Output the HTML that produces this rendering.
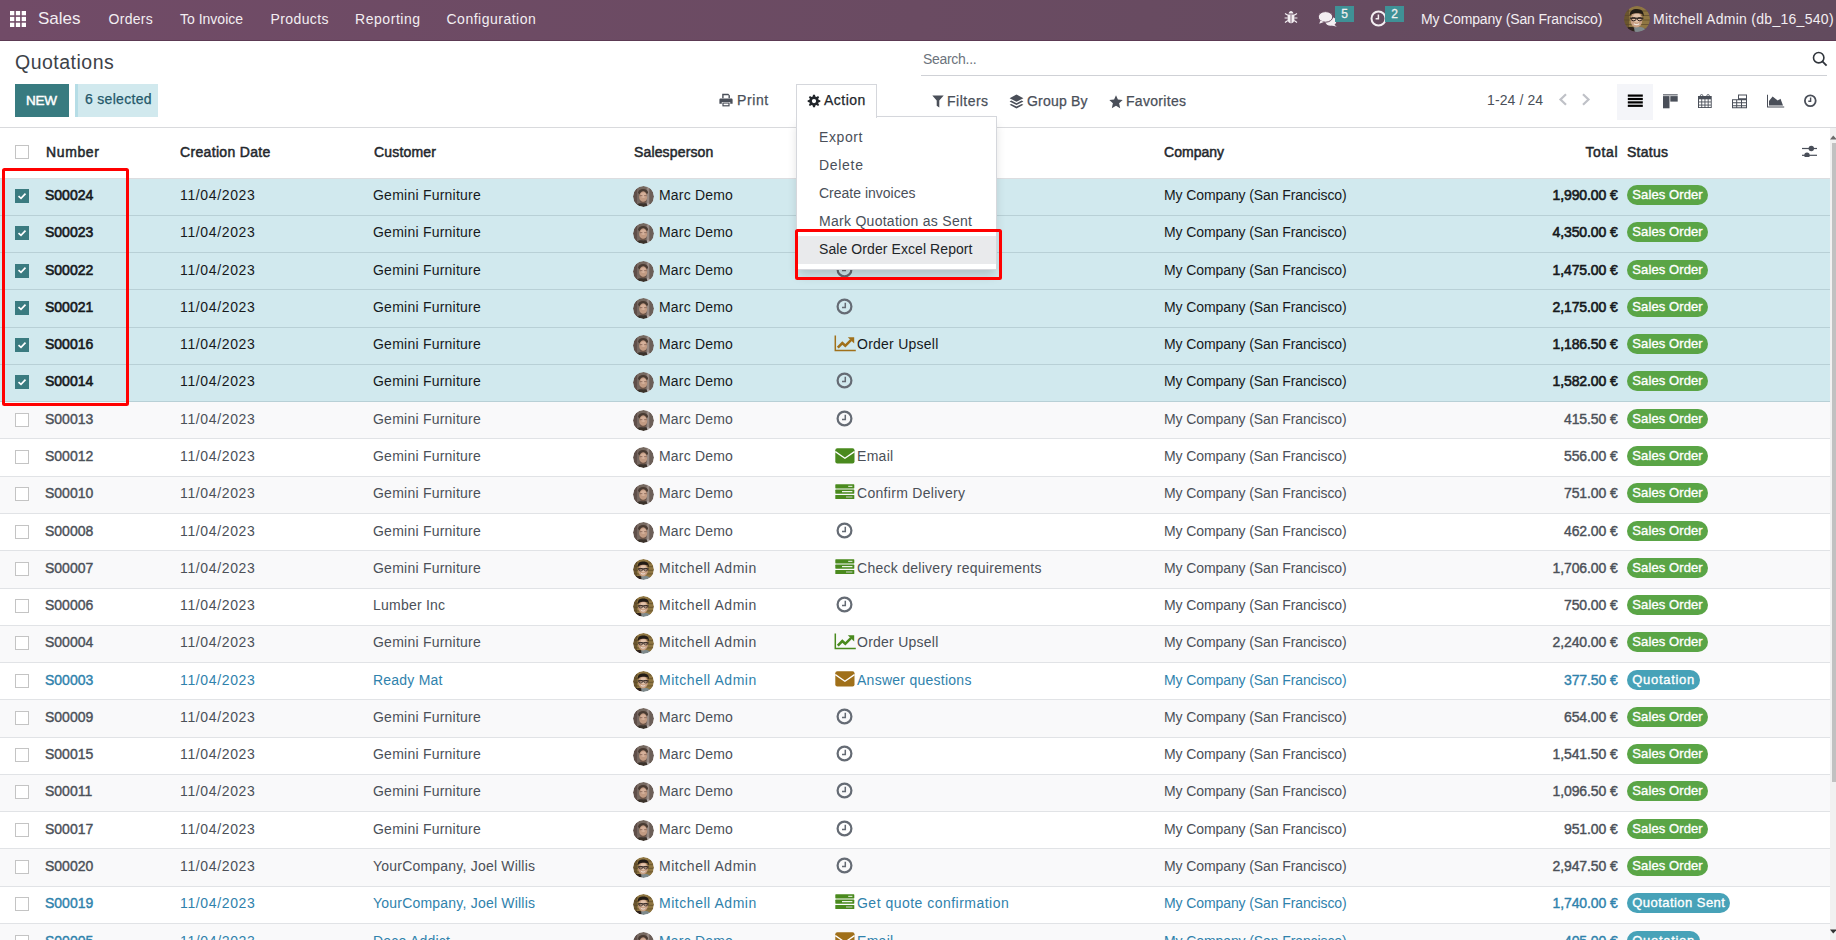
<!DOCTYPE html>
<html><head><meta charset="utf-8"><title>Quotations</title><style>
*{box-sizing:border-box;margin:0;padding:0}
html,body{width:1836px;height:940px;overflow:hidden;background:#fff}
body{font-family:"Liberation Sans",sans-serif;font-size:14px;color:#495057;position:relative}
.abs{position:absolute;white-space:nowrap;line-height:16px}
.med{-webkit-text-stroke:.25px currentColor}
/* navbar */
#nav{position:absolute;left:0;top:0;width:1836px;height:41px;background:linear-gradient(90deg,#714b67 0%,#6a4b62 50%,#624b5e 100%);border-bottom:1px solid #5c3a53}
#nav .t{position:absolute;top:11px;line-height:16px;color:#f3eef2;white-space:nowrap}
/* control panel */
#cp{position:absolute;left:0;top:41px;width:1836px;height:87px;border-bottom:1px solid #d9dadd;background:#fff}
/* table */
.hdr{position:absolute;left:0;top:128px;width:1830px;height:51px;border-bottom:1px solid #dcdde0;background:#fff}
.hdr .h{position:absolute;top:16px;line-height:16px;-webkit-text-stroke:.5px currentColor;color:#24282d;white-space:nowrap}
.row{position:absolute;left:0;width:1830px;border-bottom:1px solid #e1e3e6;background:#fff}
.row.odd{background:#f9f9fa}
.row.sel{background:#d1e9ee;border-bottom-color:#b8d0d6}
.rc{position:absolute;left:0;width:1830px;height:37px}
.rc .c{position:absolute;top:8px;line-height:16px;white-space:nowrap;color:#4b5058}
.rc.sel .c{color:#16191c}
.rc.blue .c{color:#2f82ac}
.rc .num{left:45px;-webkit-text-stroke:.4px currentColor;letter-spacing:0}
.rc .dt{left:180px;letter-spacing:.64px}
.rc .cu{left:373px}
.rc .sp{left:659px}
.rc .at{left:857px}
.rc .co{left:1164px;letter-spacing:-.1px}
.rc .tot{right:212.3px;-webkit-text-stroke:.4px currentColor;letter-spacing:-.1px;text-align:right}
.rc .av{position:absolute;left:633px;top:7px;width:21px;height:21px;border-radius:50%;overflow:hidden}
.rc .av svg{display:block}
.rc .ai{position:absolute}
.rc .ck{left:836px;top:7px}
.rc .ch{left:833.5px;top:6.5px}
.rc .ml{left:835px;top:7.8px}
.rc .tk{left:835px;top:7px}
.cb{position:absolute;left:15px;top:10px;width:14px;height:14px;border:1.5px solid #c4c4c4;background:#fff}
.cb.on{background:#3a7b80;border-color:#3a7b80}
.cb.on svg{position:absolute;left:-1.5px;top:-1.5px}
.rc .badge{position:absolute;left:1627px;top:6px;height:20px;border-radius:10px;padding:0 5px 0 5.3px;color:#fff;font-size:13px;line-height:20px;white-space:nowrap;letter-spacing:.1px;-webkit-text-stroke:.35px #fff}
.rc .badge.bq{letter-spacing:.7px}
.rc .badge.bqs{letter-spacing:.45px}
.rc.sel .num,.rc.sel .tot{-webkit-text-stroke:.6px currentColor}

</style></head><body>
<svg width="0" height="0" style="position:absolute">
 <defs>
  <filter id="bl" x="-10%" y="-10%" width="120%" height="120%"><feGaussianBlur stdDeviation="0.55"/></filter>
  <clipPath id="cc"><circle cx="13" cy="13" r="13"/></clipPath>
  <symbol id="ava" viewBox="0 0 26 26">
   <g clip-path="url(#cc)"><g filter="url(#bl)">
    <rect x="-2" y="-2" width="30" height="30" fill="#8f7642"/>
    <path d="M-2 5H28M-2 9.5H28M-2 14H28M-2 18.5H28M-2 23H28" stroke="#6a5630" stroke-width="1.2"/>
    <rect x="-2" y="-2" width="7" height="30" fill="#5a4628" opacity=".7"/>
    <path d="M6 28C7 22 10 20.5 14 21C18 20.5 22 22 24 28Z" fill="#7f8a8c"/>
    <path d="M-2 28C0 22 4 20 10 21.5L11 28Z" fill="#2f241c"/>
    <ellipse cx="12.4" cy="13.8" rx="6" ry="7.8" fill="#c9a084"/>
    <ellipse cx="12.8" cy="12" rx="3.8" ry="4.4" fill="#e2c2aa"/>
    <path d="M5.6 9.5C6 4.5 9 3 13 3.1C17.5 3.2 20 5.5 19.8 10.5L18.3 8.2C16 6.8 10 6.8 7 8.7Z" fill="#241a15"/>
    <path d="M5.8 12.2H19.4" stroke="#2e2420" stroke-width="1.3"/>
    <ellipse cx="9.6" cy="13.2" rx="2.4" ry="1.6" fill="none" stroke="#2e2420" stroke-width="1"/>
    <ellipse cx="15.8" cy="13.2" rx="2.4" ry="1.6" fill="none" stroke="#2e2420" stroke-width="1"/>
    <path d="M9.8 17.6C11.2 19 13.8 19 15.2 17.6" stroke="#efe4dc" stroke-width="1.2" fill="none"/>
   </g></g>
  </symbol>
  <symbol id="avm" viewBox="0 0 26 26">
   <g clip-path="url(#cc)"><g filter="url(#bl)">
    <rect x="-2" y="-2" width="30" height="30" fill="#75675f"/>
    <rect x="-2" y="-2" width="7" height="30" fill="#5e504a"/>
    <rect x="17" y="-2" width="3" height="30" fill="#978a84"/>
    <rect x="21" y="-2" width="7" height="30" fill="#6c5f58"/>
    <ellipse cx="12.5" cy="7.8" rx="6" ry="4.2" fill="#4a3a31"/>
    <ellipse cx="12.6" cy="13.2" rx="5" ry="6.6" fill="#c19a82"/>
    <ellipse cx="12.8" cy="11.5" rx="3.2" ry="3.4" fill="#d5b09a"/>
    <path d="M8.2 12H11.6M13.8 12H17" stroke="#7b5a4c" stroke-width="1"/>
    <path d="M8.5 17C10 20.5 15 20.5 16.8 17L16 20C14 21.5 11 21.5 9 20Z" fill="#6e5446"/>
    <path d="M2 28C3 22.5 7 21 12.5 21.6C18 21 21.5 22.5 23 28Z" fill="#3a302b"/>
    <path d="M17 21L22 23L22 28L18 28Z" fill="#d8d2d0" opacity=".7"/>
   </g></g>
  </symbol>
 </defs>
</svg>
<div id="nav">
 <svg style="position:absolute;left:10px;top:11px" width="16" height="16" viewBox="0 0 16 16" fill="#fff">
  <rect x="0" y="0" width="4.3" height="4.3"/><rect x="5.85" y="0" width="4.3" height="4.3"/><rect x="11.7" y="0" width="4.3" height="4.3"/>
  <rect x="0" y="5.85" width="4.3" height="4.3"/><rect x="5.85" y="5.85" width="4.3" height="4.3"/><rect x="11.7" y="5.85" width="4.3" height="4.3"/>
  <rect x="0" y="11.7" width="4.3" height="4.3"/><rect x="5.85" y="11.7" width="4.3" height="4.3"/><rect x="11.7" y="11.7" width="4.3" height="4.3"/>
 </svg>
 <span class="t" style="left:38px;top:9px;font-size:17px;line-height:20px">Sales</span>
 <span class="t" style="left:108.5px;letter-spacing:.3px">Orders</span>
 <span class="t" style="left:180px">To Invoice</span>
 <span class="t" style="left:270.5px;letter-spacing:.4px">Products</span>
 <span class="t" style="left:355px;letter-spacing:.55px">Reporting</span>
 <span class="t" style="left:446.5px;letter-spacing:.5px">Configuration</span>
 <!-- bug -->
 <svg style="position:absolute;left:1284px;top:10px" width="14" height="14" viewBox="0 0 14 14" fill="#f3eef2">
  <path d="M4.6 3.6C4.9 2 5.9 1 7 1C8.1 1 9.1 2 9.4 3.6Z"/>
  <path d="M3.6 4.4H10.4V9.5C10.4 11.6 8.9 13.2 7 13.2C5.1 13.2 3.6 11.6 3.6 9.5Z"/>
  <path d="M1 3.5L3.8 5.2M13 3.5L10.2 5.2M0.6 8H3.6M13.4 8H10.4M1 12.5L3.8 10.6M13 12.5L10.2 10.6" stroke="#f3eef2" stroke-width="1.2"/>
  <rect x="6.6" y="4.8" width="0.8" height="8" fill="#6a4b62"/>
 </svg>
 <!-- chat -->
 <svg style="position:absolute;left:1318px;top:11px" width="20" height="17" viewBox="0 0 20 17" fill="#f3eef2">
  <ellipse cx="12.8" cy="10.3" rx="5.6" ry="4.4"/>
  <path d="M15.5 13L18.8 15.8L14 14.6Z"/>
  <ellipse cx="7.5" cy="5.9" rx="7.2" ry="5.3" stroke="#684b60" stroke-width="1"/>
  <path d="M2.5 9.5L1.2 12.8L5.8 11Z"/>
 </svg>
 <span style="position:absolute;left:1335px;top:6px;width:19px;height:16px;background:#3f9196;color:#f0f0f0;font-size:12px;line-height:16px;text-align:center;-webkit-text-stroke:.3px #f0f0f0">5</span>
 <!-- clock -->
 <svg style="position:absolute;left:1370px;top:10px" width="17" height="17" viewBox="0 0 17 17">
  <circle cx="8.5" cy="8.5" r="7" fill="none" stroke="#f3eef2" stroke-width="2"/>
  <path d="M8.4 4.6V8.8H5.6" fill="none" stroke="#f3eef2" stroke-width="1.5"/>
 </svg>
 <span style="position:absolute;left:1385px;top:6px;width:19px;height:16px;background:#3f9196;color:#f0f0f0;font-size:12px;line-height:16px;text-align:center;-webkit-text-stroke:.3px #f0f0f0">2</span>
 <span class="t" style="left:1421px;letter-spacing:-.15px">My Company (San Francisco)</span>
 <span style="position:absolute;left:1624px;top:6px;width:26px;height:26px;border-radius:50%;overflow:hidden"><svg width="26" height="26" viewBox="0 0 26 26" style="display:block"><use href="#ava"/></svg></span>
 <span class="t" style="left:1653px;letter-spacing:.28px">Mitchell Admin (db_16_540)</span>
</div>
<div id="cp">
 <span class="abs" style="left:15px;top:10px;font-size:19.5px;line-height:22px;letter-spacing:.5px;color:#3d4248">Quotations</span>
 <!-- search -->
 <span class="abs" style="left:923px;top:10px;color:#6c737c;letter-spacing:-.3px">Search...</span>
 <div style="position:absolute;left:921px;top:34px;width:906px;height:1px;background:#cfd1d6"></div>
 <svg style="position:absolute;left:1812px;top:10px" width="16" height="16" viewBox="0 0 16 16"><circle cx="6.7" cy="6.7" r="5.2" fill="none" stroke="#2f343b" stroke-width="1.6"/><path d="M10.4 10.4L14.6 14.6" stroke="#2f343b" stroke-width="1.8"/></svg>
 <!-- buttons -->
 <div style="position:absolute;left:15px;top:43px;width:54px;height:33px;background:#387b80"></div>
 <span class="abs" style="left:26px;top:51.5px;font-size:13.5px;color:#fff;-webkit-text-stroke:.45px #fff;letter-spacing:-.3px">NEW</span>
 <div style="position:absolute;left:75px;top:43px;width:83px;height:33px;background:#d1e9ee;border-left:3px solid #b6dde6"></div>
 <span class="abs med" style="left:85px;top:50px;color:#24586a;letter-spacing:.3px">6 selected</span>
 <!-- print -->
 <svg style="position:absolute;left:719px;top:93px;top:52px" width="14" height="14" viewBox="0 0 14 14" fill="#4a4f59">
  <path d="M3.2 0.8H9.3L10.9 2.4V5.2H9.5V2.2H4.6V5.2H3.2Z"/>
  <path d="M1.6 5.6H12.4C13.1 5.6 13.6 6.1 13.6 6.8V10.8H11.2V8.9H2.8V10.8H0.4V6.8C0.4 6.1 0.9 5.6 1.6 5.6Z"/>
  <path d="M3.4 9.5H10.6V13.4H3.4Z"/><rect x="4.6" y="10.6" width="4.8" height="1.6" fill="#fff"/>
 </svg>
 <span class="abs med" style="left:737px;top:51px;color:#4a4f59;letter-spacing:.6px">Print</span>
 <!-- action toggle -->
 <div style="position:absolute;left:796px;top:43px;width:81px;height:34px;border:1px solid #d5d7dc;border-bottom:none;background:#fff;z-index:3"></div>
 <svg style="position:absolute;left:806.5px;top:53px;z-index:4" width="14" height="14" viewBox="0 0 14 14"><path fill="#22262b" fill-rule="evenodd" d="M6 0.8H8L8.3 2.5L9.6 3L11 2L12.2 3.2L11.2 4.6L11.7 5.9L13.3 6.2V7.9L11.7 8.2L11.2 9.5L12.2 10.9L11 12.1L9.6 11.1L8.3 11.6L8 13.3H6L5.7 11.6L4.4 11.1L3 12.1L1.8 10.9L2.8 9.5L2.3 8.2L0.7 7.9V6.2L2.3 5.9L2.8 4.6L1.8 3.2L3 2L4.4 3L5.7 2.5Z M7 4.9A2.15 2.15 0 1 0 7 9.2A2.15 2.15 0 1 0 7 4.9Z"/></svg>
 <span class="abs med" style="left:824px;top:51px;color:#22262b;letter-spacing:.5px;z-index:4">Action</span>
 <!-- filters -->
 <svg style="position:absolute;left:932px;top:54px" width="12" height="13" viewBox="0 0 12 13" fill="#4a4f59"><path d="M0.3 0.5H11.7L7.3 5.6V12.5L4.7 10.8V5.6Z"/></svg>
 <span class="abs med" style="left:947px;top:52px;color:#4a4f59;letter-spacing:.5px">Filters</span>
 <svg style="position:absolute;left:1009px;top:52.5px" width="15" height="16" viewBox="0 0 15 16" fill="#4a4f59">
  <path d="M7.5 0.6L14.4 4.2L7.5 7.8L0.6 4.2Z"/>
  <path d="M2.3 6.6L7.5 9.3L12.7 6.6L14.4 7.5L7.5 11.1L0.6 7.5Z"/>
  <path d="M2.3 9.9L7.5 12.6L12.7 9.9L14.4 10.8L7.5 14.4L0.6 10.8Z"/>
 </svg>
 <span class="abs med" style="left:1027px;top:52px;color:#4a4f59;letter-spacing:.2px">Group By</span>
 <svg style="position:absolute;left:1108.5px;top:53.5px" width="14" height="14" viewBox="0 0 14 14" fill="#4a4f59"><path d="M7 0.2L8.9 4.6L13.7 5L10.1 8.3L11.2 13.3L7 10.7L2.8 13.3L3.9 8.3L0.3 5L5.1 4.6Z"/></svg>
 <span class="abs med" style="left:1126px;top:52px;color:#4a4f59;letter-spacing:.3px">Favorites</span>
 <!-- pager -->
 <span class="abs" style="left:1487px;top:51px;color:#4a4f59;letter-spacing:.1px">1-24 / 24</span>
 <svg style="position:absolute;left:1558px;top:52px" width="10" height="13" viewBox="0 0 10 13"><path d="M8 1.2L2.5 6.5L8 11.8" fill="none" stroke="#bfc1c7" stroke-width="2.2"/></svg>
 <svg style="position:absolute;left:1581px;top:52px" width="10" height="13" viewBox="0 0 10 13"><path d="M2 1.2L7.5 6.5L2 11.8" fill="none" stroke="#bfc1c7" stroke-width="2.2"/></svg>
 <!-- view switcher -->
 <div style="position:absolute;left:1617px;top:43px;width:36px;height:36px;background:#f4f5f9"></div>
 <svg style="position:absolute;left:1627px;top:52px" width="16" height="14" viewBox="0 0 16 14" fill="#000"><rect x="0.8" y="1.5" width="15" height="2.2"/><rect x="0.8" y="4.9" width="15" height="2.2"/><rect x="0.8" y="8.3" width="15" height="2.2"/><rect x="0.8" y="11.7" width="15" height="2.2"/></svg>
 <svg style="position:absolute;left:1662px;top:52px" width="16" height="16" viewBox="0 0 16 16" fill="#4a4f59"><rect x="1" y="1.3" width="14.7" height="1.1"/><rect x="1" y="3.1" width="6.5" height="12.2"/><rect x="8.3" y="3.1" width="7.4" height="5.5"/></svg>
 <svg style="position:absolute;left:1697px;top:52px" width="16" height="16" viewBox="0 0 16 16" fill="#4a4f59">
  <rect x="1" y="3" width="13.7" height="12"/>
  <g fill="#fff">
   <rect x="2" y="6.3" width="2.3" height="2.2"/><rect x="5.2" y="6.3" width="2.3" height="2.2"/><rect x="8.4" y="6.3" width="2.3" height="2.2"/><rect x="11.6" y="6.3" width="2.2" height="2.2"/>
   <rect x="2" y="9.4" width="2.3" height="2.2"/><rect x="5.2" y="9.4" width="2.3" height="2.2"/><rect x="8.4" y="9.4" width="2.3" height="2.2"/><rect x="11.6" y="9.4" width="2.2" height="2.2"/>
   <rect x="2" y="12.5" width="2.3" height="1.6"/><rect x="5.2" y="12.5" width="2.3" height="1.6"/><rect x="8.4" y="12.5" width="2.3" height="1.6"/><rect x="11.6" y="12.5" width="2.2" height="1.6"/>
  </g>
  <rect x="3.4" y="1.6" width="2.4" height="3" rx="1" fill="none" stroke="#4a4f59" stroke-width="0.9"/>
  <rect x="9.9" y="1.6" width="2.4" height="3" rx="1" fill="none" stroke="#4a4f59" stroke-width="0.9"/>
 </svg>
 <svg style="position:absolute;left:1731px;top:52px" width="17" height="16" viewBox="0 0 17 16" fill="#4a4f59">
  <path fill-rule="evenodd" d="M7 1.5H16V15.2H1V6.2H7Z M8 2.5V5.3H15V2.5Z M2 7.2V9.3H5.2V7.2Z M6.2 7.2V9.3H10V7.2Z M11 7.2V9.3H15V7.2Z M2 10.3V12.3H5.2V10.3Z M6.2 10.3V12.3H10V10.3Z M11 10.3V12.3H15V10.3Z M2 13.3V14.2H5.2V13.3Z M6.2 13.3V14.2H10V13.3Z M11 13.3V14.2H15V13.3Z"/>
 </svg>
 <svg style="position:absolute;left:1766px;top:52px" width="19" height="16" viewBox="0 0 19 16" fill="#4a4f59"><path d="M1 1.7H2V13.4H18.2V14.6H1Z"/><path d="M3 12.4V8L6.6 3.6L11.7 7.6L14.5 5.8L17 12.4Z"/></svg>
 <svg style="position:absolute;left:1803px;top:52px" width="15" height="15" viewBox="0 0 15 15"><circle cx="7.3" cy="7.7" r="5.4" fill="none" stroke="#4a4f59" stroke-width="1.8"/><path d="M7.6 4.6V8.2H5.3" fill="none" stroke="#4a4f59" stroke-width="1.4"/></svg>
</div>
<div class="hdr">
 <span class="cb" style="top:17px"></span>
 <span class="h" style="left:46px;letter-spacing:.63px">Number</span>
 <span class="h" style="left:180px;letter-spacing:.33px">Creation Date</span>
 <span class="h" style="left:374px;letter-spacing:.17px">Customer</span>
 <span class="h" style="left:634px;letter-spacing:.15px">Salesperson</span>
 <span class="h" style="left:857px">Activities</span>
 <span class="h" style="left:1164px;letter-spacing:.03px">Company</span>
 <span class="h" style="right:211.7px;letter-spacing:.66px">Total</span>
 <span class="h" style="left:1627px;letter-spacing:.28px">Status</span>
 <svg style="position:absolute;left:1801px;top:17px" width="17" height="12" viewBox="0 0 17 12" fill="#4a4f59"><rect x="1" y="2.9" width="15" height="1.2"/><rect x="1" y="9.7" width="15" height="1.2"/><circle cx="10.3" cy="3.5" r="2.7"/><circle cx="6" cy="10.3" r="2.7"/></svg>
</div>
<div class="row sel" style="top:179px;height:37px"></div>
<div class="rc sel" style="top:179.10px"><span class="cb on"><svg width="14" height="14" viewBox="0 0 14 14"><path d="M3.5 7.2L6 9.4L10.5 4.7" fill="none" stroke="#fff" stroke-width="1.7"/></svg></span><span class="c num">S00024</span><span class="c dt">11/04/2023</span><span class="c cu" style="letter-spacing:0.235px">Gemini Furniture</span><span class="av"><svg width="21" height="21" viewBox="0 0 26 26"><use href="#avm"/></svg></span><span class="c sp" style="letter-spacing:0.18px">Marc Demo</span><svg class="ai ck" width="17" height="17" viewBox="0 0 17 17"><circle cx="8.5" cy="8.5" r="6.9" fill="none" stroke="#656b74" stroke-width="2.2"/><path d="M9.3 4.8V9.6H6" fill="none" stroke="#656b74" stroke-width="1.5"/></svg><span class="c at" style="letter-spacing:0.26px"></span><span class="c co">My Company (San Francisco)</span><span class="c tot">1,990.00 €</span><span class="badge bso" style="background:#5aa546">Sales Order</span></div>
<div class="row sel" style="top:216px;height:37px"></div>
<div class="rc sel" style="top:216.37px"><span class="cb on"><svg width="14" height="14" viewBox="0 0 14 14"><path d="M3.5 7.2L6 9.4L10.5 4.7" fill="none" stroke="#fff" stroke-width="1.7"/></svg></span><span class="c num">S00023</span><span class="c dt">11/04/2023</span><span class="c cu" style="letter-spacing:0.235px">Gemini Furniture</span><span class="av"><svg width="21" height="21" viewBox="0 0 26 26"><use href="#avm"/></svg></span><span class="c sp" style="letter-spacing:0.18px">Marc Demo</span><svg class="ai ck" width="17" height="17" viewBox="0 0 17 17"><circle cx="8.5" cy="8.5" r="6.9" fill="none" stroke="#656b74" stroke-width="2.2"/><path d="M9.3 4.8V9.6H6" fill="none" stroke="#656b74" stroke-width="1.5"/></svg><span class="c at" style="letter-spacing:0.26px"></span><span class="c co">My Company (San Francisco)</span><span class="c tot">4,350.00 €</span><span class="badge bso" style="background:#5aa546">Sales Order</span></div>
<div class="row sel" style="top:253px;height:37px"></div>
<div class="rc sel" style="top:253.64px"><span class="cb on"><svg width="14" height="14" viewBox="0 0 14 14"><path d="M3.5 7.2L6 9.4L10.5 4.7" fill="none" stroke="#fff" stroke-width="1.7"/></svg></span><span class="c num">S00022</span><span class="c dt">11/04/2023</span><span class="c cu" style="letter-spacing:0.235px">Gemini Furniture</span><span class="av"><svg width="21" height="21" viewBox="0 0 26 26"><use href="#avm"/></svg></span><span class="c sp" style="letter-spacing:0.18px">Marc Demo</span><svg class="ai ck" width="17" height="17" viewBox="0 0 17 17"><circle cx="8.5" cy="8.5" r="6.9" fill="none" stroke="#656b74" stroke-width="2.2"/><path d="M9.3 4.8V9.6H6" fill="none" stroke="#656b74" stroke-width="1.5"/></svg><span class="c at" style="letter-spacing:0.26px"></span><span class="c co">My Company (San Francisco)</span><span class="c tot">1,475.00 €</span><span class="badge bso" style="background:#5aa546">Sales Order</span></div>
<div class="row sel" style="top:290px;height:38px"></div>
<div class="rc sel" style="top:290.91px"><span class="cb on"><svg width="14" height="14" viewBox="0 0 14 14"><path d="M3.5 7.2L6 9.4L10.5 4.7" fill="none" stroke="#fff" stroke-width="1.7"/></svg></span><span class="c num">S00021</span><span class="c dt">11/04/2023</span><span class="c cu" style="letter-spacing:0.235px">Gemini Furniture</span><span class="av"><svg width="21" height="21" viewBox="0 0 26 26"><use href="#avm"/></svg></span><span class="c sp" style="letter-spacing:0.18px">Marc Demo</span><svg class="ai ck" width="17" height="17" viewBox="0 0 17 17"><circle cx="8.5" cy="8.5" r="6.9" fill="none" stroke="#656b74" stroke-width="2.2"/><path d="M9.3 4.8V9.6H6" fill="none" stroke="#656b74" stroke-width="1.5"/></svg><span class="c at" style="letter-spacing:0.26px"></span><span class="c co">My Company (San Francisco)</span><span class="c tot">2,175.00 €</span><span class="badge bso" style="background:#5aa546">Sales Order</span></div>
<div class="row sel" style="top:328px;height:37px"></div>
<div class="rc sel" style="top:328.18px"><span class="cb on"><svg width="14" height="14" viewBox="0 0 14 14"><path d="M3.5 7.2L6 9.4L10.5 4.7" fill="none" stroke="#fff" stroke-width="1.7"/></svg></span><span class="c num">S00016</span><span class="c dt">11/04/2023</span><span class="c cu" style="letter-spacing:0.235px">Gemini Furniture</span><span class="av"><svg width="21" height="21" viewBox="0 0 26 26"><use href="#avm"/></svg></span><span class="c sp" style="letter-spacing:0.18px">Marc Demo</span><svg class="ai ch" width="22" height="17" viewBox="0 0 22 17"><path d="M1.3 0.5V15.6H21.8" fill="none" stroke="#a0701a" stroke-width="1.5"/><path d="M3.8 12.6L8.3 8L11.3 10.8L17.2 4.8" fill="none" stroke="#a0701a" stroke-width="2.6"/><path d="M13.8 2.2H20.2V8.6Z" fill="#a0701a"/></svg><span class="c at" style="letter-spacing:0.25px">Order Upsell</span><span class="c co">My Company (San Francisco)</span><span class="c tot">1,186.50 €</span><span class="badge bso" style="background:#5aa546">Sales Order</span></div>
<div class="row sel" style="top:365px;height:37px"></div>
<div class="rc sel" style="top:365.45px"><span class="cb on"><svg width="14" height="14" viewBox="0 0 14 14"><path d="M3.5 7.2L6 9.4L10.5 4.7" fill="none" stroke="#fff" stroke-width="1.7"/></svg></span><span class="c num">S00014</span><span class="c dt">11/04/2023</span><span class="c cu" style="letter-spacing:0.235px">Gemini Furniture</span><span class="av"><svg width="21" height="21" viewBox="0 0 26 26"><use href="#avm"/></svg></span><span class="c sp" style="letter-spacing:0.18px">Marc Demo</span><svg class="ai ck" width="17" height="17" viewBox="0 0 17 17"><circle cx="8.5" cy="8.5" r="6.9" fill="none" stroke="#656b74" stroke-width="2.2"/><path d="M9.3 4.8V9.6H6" fill="none" stroke="#656b74" stroke-width="1.5"/></svg><span class="c at" style="letter-spacing:0.26px"></span><span class="c co">My Company (San Francisco)</span><span class="c tot">1,582.00 €</span><span class="badge bso" style="background:#5aa546">Sales Order</span></div>
<div class="row odd" style="top:402px;height:37px"></div>
<div class="rc odd" style="top:402.72px"><span class="cb"></span><span class="c num">S00013</span><span class="c dt">11/04/2023</span><span class="c cu" style="letter-spacing:0.235px">Gemini Furniture</span><span class="av"><svg width="21" height="21" viewBox="0 0 26 26"><use href="#avm"/></svg></span><span class="c sp" style="letter-spacing:0.18px">Marc Demo</span><svg class="ai ck" width="17" height="17" viewBox="0 0 17 17"><circle cx="8.5" cy="8.5" r="6.9" fill="none" stroke="#656b74" stroke-width="2.2"/><path d="M9.3 4.8V9.6H6" fill="none" stroke="#656b74" stroke-width="1.5"/></svg><span class="c at" style="letter-spacing:0.26px"></span><span class="c co">My Company (San Francisco)</span><span class="c tot">415.50 €</span><span class="badge bso" style="background:#5aa546">Sales Order</span></div>
<div class="row" style="top:439px;height:38px"></div>
<div class="rc " style="top:439.99px"><span class="cb"></span><span class="c num">S00012</span><span class="c dt">11/04/2023</span><span class="c cu" style="letter-spacing:0.235px">Gemini Furniture</span><span class="av"><svg width="21" height="21" viewBox="0 0 26 26"><use href="#avm"/></svg></span><span class="c sp" style="letter-spacing:0.18px">Marc Demo</span><svg class="ai ml" width="20" height="16" viewBox="0 0 20 16"><rect x="0.3" y="0.3" width="19.2" height="15.2" rx="2" fill="#4a8a1e"/><path d="M0.3 3.6L9.9 10.2L19.5 3.6" fill="none" stroke="#fff" stroke-width="1.3"/></svg><span class="c at" style="letter-spacing:0.3px">Email</span><span class="c co">My Company (San Francisco)</span><span class="c tot">556.00 €</span><span class="badge bso" style="background:#5aa546">Sales Order</span></div>
<div class="row odd" style="top:477px;height:37px"></div>
<div class="rc odd" style="top:477.26px"><span class="cb"></span><span class="c num">S00010</span><span class="c dt">11/04/2023</span><span class="c cu" style="letter-spacing:0.235px">Gemini Furniture</span><span class="av"><svg width="21" height="21" viewBox="0 0 26 26"><use href="#avm"/></svg></span><span class="c sp" style="letter-spacing:0.18px">Marc Demo</span><svg class="ai tk" width="20" height="16" viewBox="0 0 20 16"><rect x="0.3" y="0.3" width="19" height="4.1" rx="0.6" fill="#4a8a1e"/><rect x="0.3" y="5.6" width="19" height="4.1" rx="0.6" fill="#4a8a1e"/><rect x="0.3" y="10.9" width="19" height="4.1" rx="0.6" fill="#4a8a1e"/><rect x="13.2" y="1.8" width="4.2" height="1.1" fill="#e6ece2"/><rect x="7" y="7.1" width="10.4" height="1.1" fill="#fff"/><rect x="11" y="12.4" width="6.4" height="1.2" fill="#b9c6b2"/></svg><span class="c at" style="letter-spacing:0.3px">Confirm Delivery</span><span class="c co">My Company (San Francisco)</span><span class="c tot">751.00 €</span><span class="badge bso" style="background:#5aa546">Sales Order</span></div>
<div class="row" style="top:514px;height:37px"></div>
<div class="rc " style="top:514.53px"><span class="cb"></span><span class="c num">S00008</span><span class="c dt">11/04/2023</span><span class="c cu" style="letter-spacing:0.235px">Gemini Furniture</span><span class="av"><svg width="21" height="21" viewBox="0 0 26 26"><use href="#avm"/></svg></span><span class="c sp" style="letter-spacing:0.18px">Marc Demo</span><svg class="ai ck" width="17" height="17" viewBox="0 0 17 17"><circle cx="8.5" cy="8.5" r="6.9" fill="none" stroke="#656b74" stroke-width="2.2"/><path d="M9.3 4.8V9.6H6" fill="none" stroke="#656b74" stroke-width="1.5"/></svg><span class="c at" style="letter-spacing:0.26px"></span><span class="c co">My Company (San Francisco)</span><span class="c tot">462.00 €</span><span class="badge bso" style="background:#5aa546">Sales Order</span></div>
<div class="row odd" style="top:551px;height:38px"></div>
<div class="rc odd" style="top:551.80px"><span class="cb"></span><span class="c num">S00007</span><span class="c dt">11/04/2023</span><span class="c cu" style="letter-spacing:0.235px">Gemini Furniture</span><span class="av"><svg width="21" height="21" viewBox="0 0 26 26"><use href="#ava"/></svg></span><span class="c sp" style="letter-spacing:0.54px">Mitchell Admin</span><svg class="ai tk" width="20" height="16" viewBox="0 0 20 16"><rect x="0.3" y="0.3" width="19" height="4.1" rx="0.6" fill="#4a8a1e"/><rect x="0.3" y="5.6" width="19" height="4.1" rx="0.6" fill="#4a8a1e"/><rect x="0.3" y="10.9" width="19" height="4.1" rx="0.6" fill="#4a8a1e"/><rect x="13.2" y="1.8" width="4.2" height="1.1" fill="#e6ece2"/><rect x="7" y="7.1" width="10.4" height="1.1" fill="#fff"/><rect x="11" y="12.4" width="6.4" height="1.2" fill="#b9c6b2"/></svg><span class="c at" style="letter-spacing:0.27px">Check delivery requirements</span><span class="c co">My Company (San Francisco)</span><span class="c tot">1,706.00 €</span><span class="badge bso" style="background:#5aa546">Sales Order</span></div>
<div class="row" style="top:589px;height:37px"></div>
<div class="rc " style="top:589.07px"><span class="cb"></span><span class="c num">S00006</span><span class="c dt">11/04/2023</span><span class="c cu" style="letter-spacing:0.23px">Lumber Inc</span><span class="av"><svg width="21" height="21" viewBox="0 0 26 26"><use href="#ava"/></svg></span><span class="c sp" style="letter-spacing:0.54px">Mitchell Admin</span><svg class="ai ck" width="17" height="17" viewBox="0 0 17 17"><circle cx="8.5" cy="8.5" r="6.9" fill="none" stroke="#656b74" stroke-width="2.2"/><path d="M9.3 4.8V9.6H6" fill="none" stroke="#656b74" stroke-width="1.5"/></svg><span class="c at" style="letter-spacing:0.26px"></span><span class="c co">My Company (San Francisco)</span><span class="c tot">750.00 €</span><span class="badge bso" style="background:#5aa546">Sales Order</span></div>
<div class="row odd" style="top:626px;height:37px"></div>
<div class="rc odd" style="top:626.34px"><span class="cb"></span><span class="c num">S00004</span><span class="c dt">11/04/2023</span><span class="c cu" style="letter-spacing:0.235px">Gemini Furniture</span><span class="av"><svg width="21" height="21" viewBox="0 0 26 26"><use href="#ava"/></svg></span><span class="c sp" style="letter-spacing:0.54px">Mitchell Admin</span><svg class="ai ch" width="22" height="17" viewBox="0 0 22 17"><path d="M1.3 0.5V15.6H21.8" fill="none" stroke="#4a8a1e" stroke-width="1.5"/><path d="M3.8 12.6L8.3 8L11.3 10.8L17.2 4.8" fill="none" stroke="#4a8a1e" stroke-width="2.6"/><path d="M13.8 2.2H20.2V8.6Z" fill="#4a8a1e"/></svg><span class="c at" style="letter-spacing:0.25px">Order Upsell</span><span class="c co">My Company (San Francisco)</span><span class="c tot">2,240.00 €</span><span class="badge bso" style="background:#5aa546">Sales Order</span></div>
<div class="row blue" style="top:663px;height:37px"></div>
<div class="rc blue" style="top:663.61px"><span class="cb"></span><span class="c num">S00003</span><span class="c dt">11/04/2023</span><span class="c cu" style="letter-spacing:0.22px">Ready Mat</span><span class="av"><svg width="21" height="21" viewBox="0 0 26 26"><use href="#ava"/></svg></span><span class="c sp" style="letter-spacing:0.54px">Mitchell Admin</span><svg class="ai ml" width="20" height="16" viewBox="0 0 20 16"><rect x="0.3" y="0.3" width="19.2" height="15.2" rx="2" fill="#a0701a"/><path d="M0.3 3.6L9.9 10.2L19.5 3.6" fill="none" stroke="#fff" stroke-width="1.3"/></svg><span class="c at" style="letter-spacing:0.26px">Answer questions</span><span class="c co">My Company (San Francisco)</span><span class="c tot">377.50 €</span><span class="badge bq" style="background:#47a2b8">Quotation</span></div>
<div class="row odd" style="top:700px;height:38px"></div>
<div class="rc odd" style="top:700.88px"><span class="cb"></span><span class="c num">S00009</span><span class="c dt">11/04/2023</span><span class="c cu" style="letter-spacing:0.235px">Gemini Furniture</span><span class="av"><svg width="21" height="21" viewBox="0 0 26 26"><use href="#avm"/></svg></span><span class="c sp" style="letter-spacing:0.18px">Marc Demo</span><svg class="ai ck" width="17" height="17" viewBox="0 0 17 17"><circle cx="8.5" cy="8.5" r="6.9" fill="none" stroke="#656b74" stroke-width="2.2"/><path d="M9.3 4.8V9.6H6" fill="none" stroke="#656b74" stroke-width="1.5"/></svg><span class="c at" style="letter-spacing:0.26px"></span><span class="c co">My Company (San Francisco)</span><span class="c tot">654.00 €</span><span class="badge bso" style="background:#5aa546">Sales Order</span></div>
<div class="row" style="top:738px;height:37px"></div>
<div class="rc " style="top:738.15px"><span class="cb"></span><span class="c num">S00015</span><span class="c dt">11/04/2023</span><span class="c cu" style="letter-spacing:0.235px">Gemini Furniture</span><span class="av"><svg width="21" height="21" viewBox="0 0 26 26"><use href="#avm"/></svg></span><span class="c sp" style="letter-spacing:0.18px">Marc Demo</span><svg class="ai ck" width="17" height="17" viewBox="0 0 17 17"><circle cx="8.5" cy="8.5" r="6.9" fill="none" stroke="#656b74" stroke-width="2.2"/><path d="M9.3 4.8V9.6H6" fill="none" stroke="#656b74" stroke-width="1.5"/></svg><span class="c at" style="letter-spacing:0.26px"></span><span class="c co">My Company (San Francisco)</span><span class="c tot">1,541.50 €</span><span class="badge bso" style="background:#5aa546">Sales Order</span></div>
<div class="row odd" style="top:775px;height:37px"></div>
<div class="rc odd" style="top:775.42px"><span class="cb"></span><span class="c num">S00011</span><span class="c dt">11/04/2023</span><span class="c cu" style="letter-spacing:0.235px">Gemini Furniture</span><span class="av"><svg width="21" height="21" viewBox="0 0 26 26"><use href="#avm"/></svg></span><span class="c sp" style="letter-spacing:0.18px">Marc Demo</span><svg class="ai ck" width="17" height="17" viewBox="0 0 17 17"><circle cx="8.5" cy="8.5" r="6.9" fill="none" stroke="#656b74" stroke-width="2.2"/><path d="M9.3 4.8V9.6H6" fill="none" stroke="#656b74" stroke-width="1.5"/></svg><span class="c at" style="letter-spacing:0.26px"></span><span class="c co">My Company (San Francisco)</span><span class="c tot">1,096.50 €</span><span class="badge bso" style="background:#5aa546">Sales Order</span></div>
<div class="row" style="top:812px;height:37px"></div>
<div class="rc " style="top:812.69px"><span class="cb"></span><span class="c num">S00017</span><span class="c dt">11/04/2023</span><span class="c cu" style="letter-spacing:0.235px">Gemini Furniture</span><span class="av"><svg width="21" height="21" viewBox="0 0 26 26"><use href="#avm"/></svg></span><span class="c sp" style="letter-spacing:0.18px">Marc Demo</span><svg class="ai ck" width="17" height="17" viewBox="0 0 17 17"><circle cx="8.5" cy="8.5" r="6.9" fill="none" stroke="#656b74" stroke-width="2.2"/><path d="M9.3 4.8V9.6H6" fill="none" stroke="#656b74" stroke-width="1.5"/></svg><span class="c at" style="letter-spacing:0.26px"></span><span class="c co">My Company (San Francisco)</span><span class="c tot">951.00 €</span><span class="badge bso" style="background:#5aa546">Sales Order</span></div>
<div class="row odd" style="top:849px;height:38px"></div>
<div class="rc odd" style="top:849.96px"><span class="cb"></span><span class="c num">S00020</span><span class="c dt">11/04/2023</span><span class="c cu" style="letter-spacing:0.21px">YourCompany, Joel Willis</span><span class="av"><svg width="21" height="21" viewBox="0 0 26 26"><use href="#ava"/></svg></span><span class="c sp" style="letter-spacing:0.54px">Mitchell Admin</span><svg class="ai ck" width="17" height="17" viewBox="0 0 17 17"><circle cx="8.5" cy="8.5" r="6.9" fill="none" stroke="#656b74" stroke-width="2.2"/><path d="M9.3 4.8V9.6H6" fill="none" stroke="#656b74" stroke-width="1.5"/></svg><span class="c at" style="letter-spacing:0.26px"></span><span class="c co">My Company (San Francisco)</span><span class="c tot">2,947.50 €</span><span class="badge bso" style="background:#5aa546">Sales Order</span></div>
<div class="row blue" style="top:887px;height:37px"></div>
<div class="rc blue" style="top:887.23px"><span class="cb"></span><span class="c num">S00019</span><span class="c dt">11/04/2023</span><span class="c cu" style="letter-spacing:0.21px">YourCompany, Joel Willis</span><span class="av"><svg width="21" height="21" viewBox="0 0 26 26"><use href="#ava"/></svg></span><span class="c sp" style="letter-spacing:0.54px">Mitchell Admin</span><svg class="ai tk" width="20" height="16" viewBox="0 0 20 16"><rect x="0.3" y="0.3" width="19" height="4.1" rx="0.6" fill="#4a8a1e"/><rect x="0.3" y="5.6" width="19" height="4.1" rx="0.6" fill="#4a8a1e"/><rect x="0.3" y="10.9" width="19" height="4.1" rx="0.6" fill="#4a8a1e"/><rect x="13.2" y="1.8" width="4.2" height="1.1" fill="#e6ece2"/><rect x="7" y="7.1" width="10.4" height="1.1" fill="#fff"/><rect x="11" y="12.4" width="6.4" height="1.2" fill="#b9c6b2"/></svg><span class="c at" style="letter-spacing:0.48px">Get quote confirmation</span><span class="c co">My Company (San Francisco)</span><span class="c tot">1,740.00 €</span><span class="badge bqs" style="background:#47a2b8">Quotation Sent</span></div>
<div class="row odd blue" style="top:924px;height:37px"></div>
<div class="rc odd blue" style="top:924.50px"><span class="cb"></span><span class="c num">S00005</span><span class="c dt">11/04/2023</span><span class="c cu" style="letter-spacing:0.22px">Deco Addict</span><span class="av"><svg width="21" height="21" viewBox="0 0 26 26"><use href="#avm"/></svg></span><span class="c sp" style="letter-spacing:0.18px">Marc Demo</span><svg class="ai ml" width="20" height="16" viewBox="0 0 20 16"><rect x="0.3" y="0.3" width="19.2" height="15.2" rx="2" fill="#a0701a"/><path d="M0.3 3.6L9.9 10.2L19.5 3.6" fill="none" stroke="#fff" stroke-width="1.3"/></svg><span class="c at" style="letter-spacing:0.3px">Email</span><span class="c co">My Company (San Francisco)</span><span class="c tot">405.00 €</span><span class="badge bq" style="background:#47a2b8">Quotation</span></div>
<!-- dropdown menu -->
<div style="position:absolute;left:796px;top:116px;width:201px;height:154px;background:#fff;border:1px solid #d5d7dc;box-shadow:0 7px 10px -2px rgba(0,0,0,.17);z-index:2">
 <span class="abs" style="left:22px;top:12px;color:#4a4f59;letter-spacing:.6px">Export</span>
 <span class="abs" style="left:22px;top:40px;color:#4a4f59;letter-spacing:.7px">Delete</span>
 <span class="abs" style="left:22px;top:68px;color:#4a4f59">Create invoices</span>
 <span class="abs" style="left:22px;top:96px;color:#4a4f59;letter-spacing:.28px">Mark Quotation as Sent</span>
 <div style="position:absolute;left:0;top:119px;width:199px;height:28px;background:#e9eaec"></div>
 <span class="abs" style="left:22px;top:124px;color:#212529;letter-spacing:.08px">Sale Order Excel Report</span>
</div>
<!-- red highlight boxes -->
<div style="position:absolute;left:1.5px;top:168px;width:127.3px;height:237.8px;border:3.4px solid #ff0000;border-radius:2.5px;z-index:5"></div>
<div style="position:absolute;left:795.3px;top:228.8px;width:207.1px;height:50.8px;border:3.3px solid #ff0000;border-radius:2.5px;z-index:5"></div>
<!-- scrollbar -->
<div style="position:absolute;left:1830px;top:128px;width:6px;height:812px;background:#f1f1f1;z-index:6"></div>
<div style="position:absolute;left:1832px;top:143px;width:4px;height:639px;background:#c1c1c1;z-index:7"></div>
<svg style="position:absolute;left:1830px;top:133px;z-index:7" width="6" height="8" viewBox="0 0 6 8"><path d="M3.2 2.5L7 6.5H0Z" fill="#6a6a6a"/></svg>
<svg style="position:absolute;left:1830px;top:928px;z-index:7" width="6" height="8" viewBox="0 0 6 8"><path d="M3.2 5.5L7 1.5H0Z" fill="#333"/></svg>

</body></html>
